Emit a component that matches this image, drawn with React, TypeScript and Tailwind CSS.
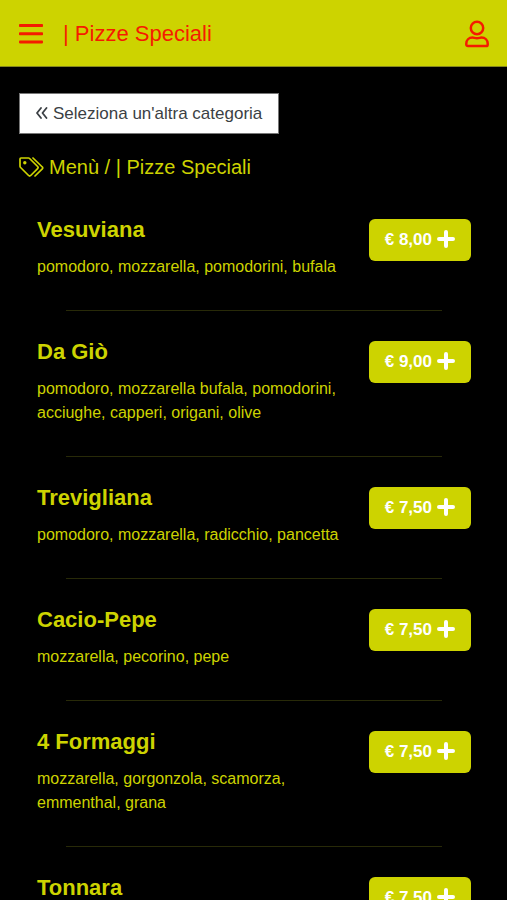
import React from 'react';

type Pizza = {
  name: string;
  ingredients: string;
  price: string;
};

const CATEGORY = '| Pizze Speciali';

const pizzas: Pizza[] = [
  { name: 'Vesuviana', ingredients: 'pomodoro, mozzarella, pomodorini, bufala', price: '€ 8,00' },
  {
    name: 'Da Giò',
    ingredients: 'pomodoro, mozzarella bufala, pomodorini, acciughe, capperi, origani, olive',
    price: '€ 9,00',
  },
  { name: 'Trevigliana', ingredients: 'pomodoro, mozzarella, radicchio, pancetta', price: '€ 7,50' },
  { name: 'Cacio-Pepe', ingredients: 'mozzarella, pecorino, pepe', price: '€ 7,50' },
  {
    name: '4 Formaggi',
    ingredients: 'mozzarella, gorgonzola, scamorza, emmenthal, grana',
    price: '€ 7,50',
  },
  { name: 'Tonnara', ingredients: 'pomodoro, mozzarella, tonno, cipolla', price: '€ 7,50' },
];

function BarsIcon() {
  return (
    <svg width="24" height="22" viewBox="0 0 24 22" fill="currentColor" aria-hidden="true">
      <rect x="0" y="1" width="24" height="3" rx="0.8" />
      <rect x="0" y="9.2" width="24" height="3" rx="0.8" />
      <rect x="0" y="17.4" width="24" height="3" rx="0.8" />
    </svg>
  );
}

function UserIcon() {
  return (
    <svg
      width="24"
      height="28"
      viewBox="0 0 24 28"
      fill="none"
      stroke="currentColor"
      strokeWidth="2.5"
      strokeLinejoin="round"
      aria-hidden="true"
    >
      <circle cx="12" cy="8" r="6.2" />
      <path d="M7.500 17.500c1.500 0 2.500.8 4.500.8s3-.8 4.500-.8c3.700 0 6.200 2.700 6.200 6v1c0 .9-.7 1.600-1.600 1.600H2.900c-.9 0-1.600-.7-1.600-1.600v-1c0-3.300 2.500-6 6.200-6z" />
    </svg>
  );
}

function DoubleLeftIcon() {
  return (
    <svg
      width="12"
      height="14"
      viewBox="0 0 12 14"
      fill="none"
      stroke="currentColor"
      strokeWidth="1.8"
      strokeLinecap="round"
      strokeLinejoin="round"
      className="mb-0.5"
      aria-hidden="true"
    >
      <path d="M5 2 1 7l4 5M10.500 2l-4 5 4 5" />
    </svg>
  );
}

function TagsIcon() {
  return (
    <svg
      width="25"
      height="20"
      viewBox="0 0 25 20"
      fill="none"
      stroke="currentColor"
      strokeWidth="1.7"
      strokeLinecap="round"
      strokeLinejoin="round"
      aria-hidden="true"
    >
      <path d="M2 1h7.500c.4 0 .8.200 1.100.5l8 8c.6.600.6 1.500 0 2.100l-6.900 6.900c-.6.600-1.500.6-2.100 0l-8-8C1.200 10.100 1 9.700 1 9.300V2c0-.6.400-1 1-1z" />
      <path d="M14 1l9.300 9c.6.500.6 1.300 0 1.800L16 19" />
      <circle cx="5.800" cy="5.800" r="1.700" fill="currentColor" stroke="none" />
    </svg>
  );
}

function PlusIcon() {
  return (
    <svg
      width="18"
      height="18"
      viewBox="0 0 18 18"
      stroke="currentColor"
      strokeWidth="4"
      strokeLinecap="round"
      className="mb-0.5"
      aria-hidden="true"
    >
      <path d="M9 2v14M2 9h14" />
    </svg>
  );
}

function PizzaRow({ pizza }: { pizza: Pizza }) {
  return (
    <li className="group">
      <div className="flex items-start justify-between gap-4 px-[18px]">
        <div className="min-w-0 max-w-[310px]">
          <h2 className="text-[22px] leading-[26px] font-bold">{pizza.name}</h2>
          <p className="mt-3 text-base leading-6">{pizza.ingredients}</p>
        </div>
        <button
          type="button"
          aria-label={`Aggiungi ${pizza.name}, ${pizza.price}`}
          className="mt-0.5 flex h-[42px] shrink-0 items-center gap-[5px] rounded-md bg-[#cdd300] px-4 text-[17px] font-bold text-white"
        >
          <span>{pizza.price}</span>
          <PlusIcon />
        </button>
      </div>
      <hr className="mx-auto mt-[31px] mb-7 w-4/5 border-[#282a08] group-last:hidden" />
    </li>
  );
}

export default function App() {
  return (
    <div className="h-screen overflow-y-auto bg-black font-['Liberation_Sans',Arial,sans-serif] text-[#cdd300] [scrollbar-width:none]">
      <header className="sticky top-0 flex h-[67px] items-center justify-between border-b border-[#85881c] bg-[#cdd300] pt-0.5 pr-[18px] pl-[19px] text-[#f51b00]">
        <div className="flex items-center gap-5">
          <button type="button" aria-label="Apri menù">
            <BarsIcon />
          </button>
          <h1 className="text-[22px] leading-7">{CATEGORY}</h1>
        </div>
        <button type="button" aria-label="Profilo">
          <UserIcon />
        </button>
      </header>

      <main className="pt-[26px] pr-[18px] pb-8 pl-[19px]">
        <button
          type="button"
          className="flex h-[41px] items-center gap-[5px] border border-[#777777] bg-white px-4 text-[17px] text-[#3b3f44]"
        >
          <DoubleLeftIcon />
          <span>Seleziona un'altra categoria</span>
        </button>

        <div className="mt-[19px] flex items-center gap-[5px] text-xl leading-7">
          <TagsIcon />
          <span>Menù / {CATEGORY}</span>
        </div>

        <ul className="mt-9">
          {pizzas.map((pizza) => (
            <PizzaRow key={pizza.name} pizza={pizza} />
          ))}
        </ul>
      </main>
    </div>
  );
}
